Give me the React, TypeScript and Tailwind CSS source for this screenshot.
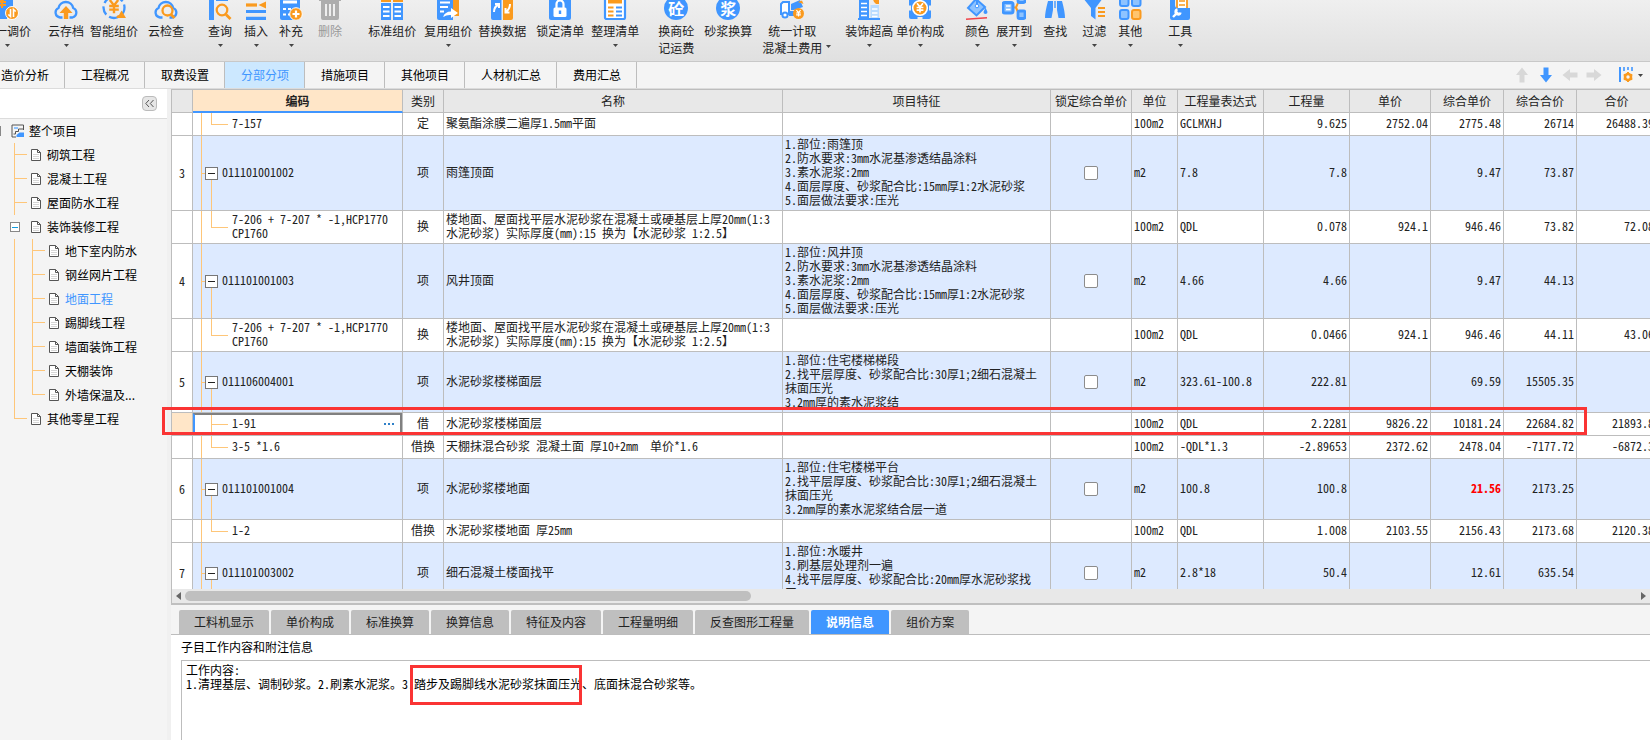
import { ReactNode } from "react";
import clsx from "clsx";

const BLUE = "#4096ff";
const ORANGE = "#fa9a1e";

const Svg = ({ children }: { children: ReactNode }) => (
  <svg className="h-6 w-6 shrink-0" viewBox="0 0 24 24" fill="none">
    {children}
  </svg>
);

const Yen = ({ x, y, s = 1, color = ORANGE }: { x: number; y: number; s?: number; color?: string }) => (
  <path
    transform={`translate(${x} ${y}) scale(${s})`}
    d="M-3.5 -5L0 -0.5L3.5 -5M0 -0.5V6M-4 0H4M-4 3H4"
    stroke={color}
    strokeWidth="2"
  />
);

const CLOUD = "M8.5 21.5H6a5 5 0 0 1-1.500-9.500A7.500 7.500 0 0 1 19.200 12A5 5 0 0 1 18.500 21.500H15.500";

const RoundGlyph = ({ char }: { char: string }) => (
  <span className="flex h-6 w-6 items-center justify-center rounded-full bg-[#4096ff] text-base leading-4 font-bold text-white">
    {char}
  </span>
);

const icons: Record<string, ReactNode> = {
  adjust: (
    <Svg>
      <path d="M5 0H18V12H12V23H5Z" fill={BLUE} />
      <Yen x={7} y={6} color={ORANGE} />
      <circle cx="17" cy="17" r="6.500" fill={ORANGE} stroke="#fff" />
      <path d="M15.500 13V20.500L13.300 18.500M18.500 21V13.500L20.700 15.500" stroke="#fff" strokeWidth="1.600" />
    </Svg>
  ),
  cloudUp: (
    <Svg>
      <path d={CLOUD} stroke={BLUE} strokeWidth="2.300" />
      <path d="M12 10L18.500 17H14.200V23H9.800V17H5.500Z" fill={ORANGE} />
    </Svg>
  ),
  smart: (
    <Svg>
      <circle cx="12" cy="11.500" r="10.500" stroke={BLUE} strokeWidth="2.300" strokeDasharray="9 3.500" />
      <Yen x={12} y={10} s={1.200} />
      <path d="M19.500 14.500L24 22H14.500Q14.500 19 17 19Z" fill={ORANGE} />
    </Svg>
  ),
  cloudCheck: (
    <Svg>
      <path d={CLOUD} stroke={BLUE} strokeWidth="2.300" />
      <circle cx="13.500" cy="14.500" r="5" fill="#eee" stroke={ORANGE} strokeWidth="2.300" />
      <path d="M17 18.500L20.500 22" stroke={ORANGE} strokeWidth="2.800" />
    </Svg>
  ),
  query: (
    <Svg>
      <path d="M1 0H6V24H1ZM8 0H20V5H8Z" fill={BLUE} />
      <circle cx="14" cy="14" r="5.300" fill="#eee" stroke={ORANGE} strokeWidth="2.200" />
      <path d="M18 18.500L22.500 23" stroke={ORANGE} strokeWidth="2.800" />
    </Svg>
  ),
  insert: (
    <Svg>
      <path d="M2 1H22M2 15.500H22M2 22.300H22" stroke={BLUE} strokeWidth="3.200" />
      <path d="M2 9H13" stroke={ORANGE} strokeWidth="3.200" />
      <path d="M14.500 9L22 5.500V12.500Z" fill={ORANGE} />
    </Svg>
  ),
  supply: (
    <Svg>
      <rect x="1" y="0" width="20" height="24" rx="2" fill={BLUE} />
      <path d="M4 6H18" stroke="#fff" strokeWidth="3" />
      <path d="M4 13H7M4 18.500H7M9 13H12M9 18.500H12" stroke="#fff" strokeWidth="2" />
      <circle cx="17" cy="18" r="6.300" fill={ORANGE} stroke="#fff" />
      <path d="M17 14.500V21.500M13.500 18H20.500" stroke="#fff" strokeWidth="2.200" />
    </Svg>
  ),
  trash: (
    <Svg>
      <path d="M1 2H23V5H1ZM3 5H21V22A2 2 0 0 1 19 24H5A2 2 0 0 1 3 22Z" fill="#adadad" />
      <path d="M8 8V20M12 8V20M16 8V20" stroke="#eee" strokeWidth="2" />
    </Svg>
  ),
  standard: (
    <Svg>
      <path d="M1 1H11V6H1ZM13 1H23V6H13Z" fill={ORANGE} />
      <path d="M1 7H11V24H1ZM13 7H23V24H13Z" fill={BLUE} />
      <path d="M3 11H9.500M3 15.500H9.500M3 20H9.500M14.500 11H21M14.500 15.500H21M14.500 20H21" stroke="#fff" strokeWidth="2" />
    </Svg>
  ),
  reuse: (
    <Svg>
      <path d="M9 1H21A2 2 0 0 1 23 3V20H9Z" fill={ORANGE} />
      <path d="M1 0H17V24H3A2 2 0 0 1 1 22Z" fill={BLUE} />
      <path d="M4 6.500H14M4 11H12M4 15.500H8" stroke="#fff" strokeWidth="2" />
      <path d="M7 21Q9 15.500 15 15.500V12L22 17L15 22V19Q11 18.500 7 21Z" fill="#fff" />
    </Svg>
  ),
  replace: (
    <Svg>
      <path d="M1 0H11.500V24H3A2 2 0 0 1 1 22Z" fill={BLUE} />
      <path d="M13 0H23V22A2 2 0 0 1 21 24H13Z" fill={ORANGE} />
      <path d="M4 16Q4 11 8 9M5 8H9V12M20 8Q20 13 16 15.500M19.500 16.500H15.500V12" stroke="#fff" strokeWidth="2" />
    </Svg>
  ),
  lock: (
    <Svg>
      <path d="M1 0H23V22A2 2 0 0 1 21 24H3A2 2 0 0 1 1 22Z" fill={BLUE} />
      <path d="M8.500 12V8A3.500 3.500 0 0 1 15.500 8V12" stroke="#fff" strokeWidth="2.200" />
      <rect x="5.500" y="11.500" width="13" height="9.500" rx="1.500" fill="#fff" />
      <path d="M12 14.500V18" stroke={BLUE} strokeWidth="2.400" />
    </Svg>
  ),
  arrange: (
    <Svg>
      <rect x="2" y="0" width="20" height="23" rx="1.500" fill="#fff" stroke={BLUE} strokeWidth="2.200" />
      <path d="M5 5.500H19" stroke={ORANGE} strokeWidth="4" />
      <path d="M5 11.500H10.500M5 15.500H10.500M5 19.500H10.500" stroke={ORANGE} strokeWidth="2" />
      <path d="M13 11.500H19M13 15.500H19M13 19.500H19" stroke={BLUE} strokeWidth="2" />
    </Svg>
  ),
  tong: <RoundGlyph char="砼" />,
  jiang: <RoundGlyph char="浆" />,
  truck: (
    <Svg>
      <path d="M1 8L3 6H9V18H1Z" stroke={BLUE} strokeWidth="2" fill="#fff" />
      <path d="M11 8L20 4L23 11L14 14H11ZM9 15H17V20H9Z" fill={BLUE} />
      <circle cx="5" cy="19" r="2.600" fill="#fff" stroke={BLUE} strokeWidth="2" />
      <path d="M18 6L22 4.500L23.500 8Z" fill={ORANGE} />
      <circle cx="18.500" cy="17.500" r="5.500" fill={ORANGE} />
      <Yen x={18.500} y={17} s={0.600} color="#fff" />
    </Svg>
  ),
  building: (
    <Svg>
      <path d="M2 0H12V22H2Z" fill={BLUE} />
      <path d="M4 7.500H10M4 11.500H10M4 15.500H10M4 19.500H10" stroke="#fff" strokeWidth="1.400" />
      <path d="M13.500 9H22V22H13.500Z" fill="#b9dcff" />
      <path d="M15 13H20.500M15 17H20.500M15 20.500H20.500" stroke="#fff" strokeWidth="1.600" />
      <path d="M16 2H22V8H19Q16 6 16 2Z" fill={ORANGE} />
      <path d="M1 23H23" stroke={BLUE} strokeWidth="2" />
    </Svg>
  ),
  chip: (
    <Svg>
      <rect x="1" y="0" width="22" height="23" rx="2" fill={BLUE} />
      <path d="M12 0V3M12 21V24M0 12H3M21 12H24" stroke="#eee" strokeWidth="5" />
      <circle cx="12" cy="12" r="7.300" fill={ORANGE} stroke="#fff" strokeWidth="1.600" />
      <Yen x={12} y={11.500} s={0.850} color="#fff" />
    </Svg>
  ),
  bucket: (
    <Svg>
      <path d="M11 3L20 11L11.500 19.500L3 12Z" fill="#8ec3ff" stroke={BLUE} strokeWidth="2" />
      <path d="M12 0V9" stroke={BLUE} strokeWidth="2" />
      <circle cx="12" cy="10" r="1.800" fill="#fff" stroke={BLUE} />
      <path d="M20.500 11.500L22.500 16A2 2 0 0 1 18.500 16Z" fill={BLUE} />
      <path d="M1 23.200L22 21.800" stroke="#f0444a" strokeWidth="1.600" />
    </Svg>
  ),
  expand: (
    <Svg>
      <path d="M11 11.500H14L17 4.500M14 11.500L17 18.500" stroke={ORANGE} strokeWidth="2" />
      <rect x="1" y="6.500" width="10" height="10.500" rx="2" fill="#8ec3ff" stroke={BLUE} strokeWidth="3" />
      <path d="M4 10H8.500M4 13.500H8.500" stroke="#fff" strokeWidth="1.400" />
      <rect x="16" y="-1" width="7" height="7.500" rx="1.500" fill="#8ec3ff" stroke={BLUE} strokeWidth="2.800" />
      <rect x="16" y="15" width="7" height="7.500" rx="1.500" fill="#8ec3ff" stroke={BLUE} strokeWidth="2.800" />
    </Svg>
  ),
  find: (
    <Svg>
      <path d="M5 5H10V14L8.500 22H2Q2 16 5 5ZM19 5H14V14L15.500 22H22Q22 16 19 5Z" fill={BLUE} />
      <path d="M12 5V12" stroke={BLUE} strokeWidth="1.400" />
      <path d="M6 0H9V4H6ZM15 0H18V4H15Z" fill={BLUE} />
    </Svg>
  ),
  filter: (
    <Svg>
      <path d="M1 2H21L13.500 12V23.500L9 20V12Z" fill={BLUE} />
      <path d="M16 12H23M16 16H23M16 20H23" stroke={ORANGE} strokeWidth="2" />
    </Svg>
  ),
  others: (
    <Svg>
      <rect x="2" y="1" width="8.500" height="9" rx="2" fill="#8ec3ff" stroke={BLUE} strokeWidth="2" />
      <rect x="14" y="1" width="8.500" height="9" rx="2" fill="#8ec3ff" stroke={BLUE} strokeWidth="2" />
      <rect x="2" y="14" width="8.500" height="9" rx="2" fill="#8ec3ff" stroke={BLUE} strokeWidth="2" />
      <rect x="14" y="14" width="8.500" height="9" rx="2" fill="#ffc56e" stroke={ORANGE} strokeWidth="2" />
    </Svg>
  ),
  tools: (
    <Svg>
      <rect x="9" y="0" width="10" height="14" fill="#fff" stroke={ORANGE} strokeWidth="1.800" />
      <path d="M11 5H17M11 9H17" stroke={ORANGE} strokeWidth="1.600" />
      <path d="M2 4H7V9Q7 12 10 12H22V22A2 2 0 0 1 20 24H4A2 2 0 0 1 2 22Z" fill={BLUE} />
      <path d="M5 21L10 16M9.500 13.500A2.500 2.500 0 1 0 12.500 16.500" stroke="#fff" strokeWidth="2.400" />
    </Svg>
  ),
};

type Tool = { icon: string; label: string; label2?: string; gap: string; menu?: boolean; disabled?: boolean };

const tools: Tool[] = [
  { icon: "adjust", label: "统一调价", gap: "-ml-[17px]", menu: true },
  { icon: "cloudUp", label: "云存档", gap: "ml-[17px]", menu: true },
  { icon: "smart", label: "智能组价", gap: "ml-1.5" },
  { icon: "cloudCheck", label: "云检查", gap: "ml-2.5" },
  { icon: "query", label: "查询", gap: "ml-6", menu: true },
  { icon: "insert", label: "插入", gap: "ml-3", menu: true },
  { icon: "supply", label: "补充", gap: "ml-[11px]", menu: true },
  { icon: "trash", label: "删除", gap: "ml-[15px]", disabled: true },
  { icon: "standard", label: "标准组价", gap: "ml-[26px]" },
  { icon: "reuse", label: "复用组价", gap: "ml-2", menu: true },
  { icon: "replace", label: "替换数据", gap: "ml-1.5" },
  { icon: "lock", label: "锁定清单", gap: "ml-2.5" },
  { icon: "arrange", label: "整理清单", gap: "ml-[7px]", menu: true },
  { icon: "tong", label: "换商砼", label2: "记运费", gap: "ml-[19px]" },
  { icon: "jiang", label: "砂浆换算", gap: "ml-2.5" },
  { icon: "truck", label: "统一计取", label2: "混凝土费用", gap: "ml-2.5", menu: true },
  { icon: "building", label: "装饰超高", gap: "ml-3.5", menu: true },
  { icon: "chip", label: "单价构成", gap: "ml-[3px]", menu: true },
  { icon: "bucket", label: "颜色", gap: "ml-[21px]", menu: true },
  { icon: "expand", label: "展开到", gap: "ml-[7px]", menu: true },
  { icon: "find", label: "查找", gap: "ml-[11px]" },
  { icon: "filter", label: "过滤", gap: "ml-[15px]", menu: true },
  { icon: "others", label: "其他", gap: "ml-3", menu: true },
  { icon: "tools", label: "工具", gap: "ml-[26px]", menu: true },
];

const Caret = ({ className }: { className?: string }) => (
  <svg className={clsx("h-[3px] w-[5px] shrink-0", className)} viewBox="0 0 5 3">
    <path d="M0 0H5L2.500 3Z" fill="#444" />
  </svg>
);

const Toolbar = () => (
  <header className="flex h-[62px] shrink-0 items-start overflow-hidden border-b border-[#c8c8c8] bg-linear-to-b from-[#efefef] to-[#e0e0e0]">
    {tools.map((tool) => (
      <button
        key={tool.label}
        type="button"
        disabled={tool.disabled}
        className={clsx(
          "-mt-1 flex shrink-0 items-end leading-[17px] whitespace-nowrap",
          tool.gap,
          tool.disabled ? "text-[#999]" : "text-[#222]"
        )}
      >
        <span className="flex flex-col items-center">
          {icons[tool.icon]}
          <span className="mt-0.5">{tool.label}</span>
          {tool.label2 && <span>{tool.label2}</span>}
          {tool.menu && !tool.label2 && <Caret className="mt-[5px]" />}
        </span>
        {tool.menu && tool.label2 && <Caret className="mb-2 ml-1" />}
      </button>
    ))}
  </header>
);

const pageTabs = ["造价分析", "工程概况", "取费设置", "分部分项", "措施项目", "其他项目", "人材机汇总", "费用汇总"];

const ARROW = "M8 0.500L14 8H10.500V15.500H5.500V8H2Z";

const ArrowButton = ({ label, rotate, active }: { label: string; rotate: number; active?: boolean }) => (
  <button type="button" aria-label={label}>
    <svg className="h-4 w-4" viewBox="0 0 16 16">
      <path d={ARROW} fill={active ? BLUE : "#d8d8d8"} transform={`rotate(${rotate} 8 8)`} />
    </svg>
  </button>
);

const PageTabs = () => (
  <nav className="flex h-[26px] shrink-0 overflow-hidden bg-[#f4f4f4]">
    {pageTabs.map((tab, i) => (
      <button
        key={tab}
        type="button"
        className={clsx(
          "shrink-0 border-r border-[#bdbdbd] pr-[15px] pl-4 whitespace-nowrap",
          i === 0 && "-ml-[15px]",
          tab === "分部分项" ? "bg-[#cce8ff] text-[#4096ff]" : "text-black"
        )}
      >
        {tab}
      </button>
    ))}
    <div className="ml-auto flex items-center gap-2 pr-[7px]">
      <ArrowButton label="上移" rotate={0} />
      <ArrowButton label="下移" rotate={180} active />
      <ArrowButton label="左移" rotate={-90} />
      <ArrowButton label="右移" rotate={90} />
      <button type="button" aria-label="列设置" className="ml-2 flex items-center gap-1">
        <svg className="h-4 w-4" viewBox="0 0 16 16" fill="none">
          <path d="M2 0V15" stroke={BLUE} strokeWidth="2" />
          <path d="M6 0V4M10 0V3M14 0V4" stroke={BLUE} strokeWidth="1.600" />
          <circle cx="10" cy="10" r="3" stroke={ORANGE} strokeWidth="2.600" />
          <path d="M10 5V7M10 13V15M5.700 7.500L7.500 8.500M12.500 11.500L14.300 12.500M5.700 12.500L7.500 11.500M12.500 8.500L14.300 7.500" stroke={ORANGE} strokeWidth="2" />
        </svg>
        <Caret />
      </button>
    </div>
  </nav>
);

type TreeNode = { label: string; level: number; open?: boolean; last?: boolean };

const tree: TreeNode[] = [
  { label: "砌筑工程", level: 1 },
  { label: "混凝土工程", level: 1 },
  { label: "屋面防水工程", level: 1 },
  { label: "装饰装修工程", level: 1, open: true },
  { label: "地下室内防水", level: 2 },
  { label: "钢丝网片工程", level: 2 },
  { label: "地面工程", level: 2 },
  { label: "踢脚线工程", level: 2 },
  { label: "墙面装饰工程", level: 2 },
  { label: "天棚装饰", level: 2 },
  { label: "外墙保温及...", level: 2, last: true },
  { label: "其他零星工程", level: 1, last: true },
];

const Guide = ({ d }: { d: string }) => (
  <svg className="h-6 w-[18px] shrink-0" viewBox="0 0 18 24" fill="none" shapeRendering="crispEdges">
    <path d={d} stroke="#fec679" />
  </svg>
);

const branchPath = (last?: boolean) => (last ? "M4.500 0V12M4 11.500H17" : "M4.500 0V24M4 11.500H17");

const Sidebar = () => (
  <aside className="flex w-[167px] shrink-0 flex-col bg-[#f4f4f4]">
    <div className="flex h-[30px] shrink-0 items-center justify-end border-b border-[#dcdcdc] bg-white pr-2.5">
      <button
        type="button"
        aria-label="收起"
        className="flex h-[15px] w-[15px] items-center justify-center rounded-sm border border-[#bbb] bg-[#e6e6e6]"
      >
        <svg className="h-[9px] w-[9px]" viewBox="0 0 9 9" fill="none">
          <path d="M4 1L0.800 4.500L4 8M8.500 1L5.300 4.500L8.500 8" stroke="#555" />
        </svg>
      </button>
    </div>
    <ul className="text-black">
      <li className="flex h-6 items-center">
        <span className="h-2.5 w-px bg-[#888]" />
        <svg className="mr-1 ml-2.5 h-3.5 w-3.5" viewBox="0 0 14 14" fill="none">
          <path d="M12.500 6V1H1V13H5" stroke="#555" />
          <path d="M3 4H7" stroke="#8ec3ff" strokeWidth="2" />
          <path d="M2.500 10H4.500V7.500H7.500V5H12.500" stroke="#555" />
          <path d="M5.500 13V11L8.500 8.500H13V13Z" fill={BLUE} />
        </svg>
        整个项目
      </li>
      {tree.map((node) => (
        <li key={node.label} className="flex h-6 items-center pl-2.5">
          {node.level === 2 && <Guide d="M4.500 0V24" />}
          {node.open ? (
            <button type="button" aria-label="折叠" className="mr-2 flex h-[10px] w-[10px] items-center justify-center border border-[#888] bg-white">
              <span className="h-px w-1.5 bg-[#0f9be0]" />
            </button>
          ) : (
            <Guide d={branchPath(node.last)} />
          )}
          <svg className="mr-1.5 ml-[3px] h-3 w-2.5 shrink-0" viewBox="0 0 10 12" fill="none">
            <path d="M0.500 0.500H6.500L9.500 3.500V11.500H0.500Z" fill="#fff" stroke="#555" />
            <path d="M6.500 0.500V3.500H9.500" stroke="#555" />
            <path d="M2 5.500H8M2 7.500H8M2 9.500H8" stroke="#ccc" strokeWidth="0.800" />
          </svg>
          <a href="#" className={clsx("whitespace-nowrap", node.label === "地面工程" && "text-[#4096ff]")}>
            {node.label}
          </a>
        </li>
      ))}
    </ul>
  </aside>
);

type Row = {
  no?: string;
  code: string;
  kind: string;
  name: string;
  feature?: string;
  unit: string;
  expr: string;
  nums: string[];
  height: string;
  more?: boolean;
  selected?: boolean;
  warn?: boolean;
};

const subCode = "7-206 + 7-207 * -1,HCP1770\nCP1760";
const subName = "楼地面、屋面找平层水泥砂浆在混凝土或硬基层上厚20mm(1:3\n水泥砂浆) 实际厚度(mm):15 换为【水泥砂浆 1:2.5】";

const rows: Row[] = [
  { code: "7-157", kind: "定", name: "聚氨酯涂膜二遍厚1.5mm平面", unit: "100m2", expr: "GCLMXHJ", nums: ["9.625", "2752.04", "2775.48", "26714", "26488.39"], height: "h-[22px]" },
  { no: "3", code: "011101001002", kind: "项", name: "雨篷顶面", feature: "1.部位:雨篷顶\n2.防水要求:3mm水泥基渗透结晶涂料\n3.素水泥浆:2mm\n4.面层厚度、砂浆配合比:15mm厚1:2水泥砂浆\n5.面层做法要求:压光", unit: "m2", expr: "7.8", nums: ["7.8", "", "9.47", "73.87", ""], height: "h-[74px]" },
  { code: subCode, kind: "换", name: subName, unit: "100m2", expr: "QDL", nums: ["0.078", "924.1", "946.46", "73.82", "72.08"], height: "h-8" },
  { no: "4", code: "011101001003", kind: "项", name: "风井顶面", feature: "1.部位:风井顶\n2.防水要求:3mm水泥基渗透结晶涂料\n3.素水泥浆:2mm\n4.面层厚度、砂浆配合比:15mm厚1:2水泥砂浆\n5.面层做法要求:压光", unit: "m2", expr: "4.66", nums: ["4.66", "", "9.47", "44.13", ""], height: "h-[74px]" },
  { code: subCode, kind: "换", name: subName, unit: "100m2", expr: "QDL", nums: ["0.0466", "924.1", "946.46", "44.11", "43.06"], height: "h-8" },
  { no: "5", code: "011106004001", kind: "项", name: "水泥砂浆楼梯面层", feature: "1.部位:住宅楼梯梯段\n2.找平层厚度、砂浆配合比:30厚1;2细石混凝土\n抹面压光\n3.2mm厚的素水泥浆结", unit: "m2", expr: "323.61-100.8", nums: ["222.81", "", "69.59", "15505.35", ""], height: "h-[60px]" },
  { code: "1-91", kind: "借", name: "水泥砂浆楼梯面层", unit: "100m2", expr: "QDL", nums: ["2.2281", "9826.22", "10181.24", "22684.82", "21893.8"], height: "h-[22px]", more: true, selected: true },
  { code: "3-5 *1.6", kind: "借换", name: "天棚抹混合砂浆 混凝土面 厚10+2mm  单价*1.6", unit: "100m2", expr: "-QDL*1.3", nums: ["-2.89653", "2372.62", "2478.04", "-7177.72", "-6872.3"], height: "h-[22px]" },
  { no: "6", code: "011101001004", kind: "项", name: "水泥砂浆楼地面", feature: "1.部位:住宅楼梯平台\n2.找平层厚度、砂浆配合比:30厚1;2细石混凝土\n抹面压光\n3.2mm厚的素水泥浆结合层一道", unit: "m2", expr: "100.8", nums: ["100.8", "", "21.56", "2173.25", ""], height: "h-[60px]", warn: true },
  { code: "1-2", kind: "借换", name: "水泥砂浆楼地面 厚25mm", unit: "100m2", expr: "QDL", nums: ["1.008", "2103.55", "2156.43", "2173.68", "2120.38"], height: "h-[22px]" },
  { no: "7", code: "011101003002", kind: "项", name: "细石混凝土楼面找平", feature: "1.部位:水暖井\n3.刷基层处理剂一遍\n4.找平层厚度、砂浆配合比:20mm厚水泥砂浆找\n平", unit: "m2", expr: "2.8*18", nums: ["50.4", "", "12.61", "635.54", ""], height: "h-[60px]" },
];

const columns = [
  { label: "", width: "w-[21px]" },
  { label: "编码", width: "w-[210px]" },
  { label: "类别", width: "w-[41px]" },
  { label: "名称", width: "w-[339px]" },
  { label: "项目特征", width: "w-[268px]" },
  { label: "锁定综合单价", width: "w-[81px]" },
  { label: "单位", width: "w-[46px]" },
  { label: "工程量表达式", width: "w-[86px]" },
  { label: "工程量", width: "w-[86px]" },
  { label: "单价", width: "w-[81px]" },
  { label: "综合单价", width: "w-[73px]" },
  { label: "综合合价", width: "w-[73px]" },
  { label: "合价", width: "w-20" },
];

const CodeCell = ({ row }: { row: Row }) => (
  <div
    className={clsx(
      "flex items-center",
      row.height,
      row.selected && "border-2 border-[#808080] border-l-[#4096ff]"
    )}
  >
    <span className={clsx("h-full shrink-0", row.selected ? "w-1.5" : "w-2")} />
    <span className={clsx("flex w-1 shrink-0 items-center self-stretch border-l", row.selected ? "border-transparent" : "border-[#fec679]")}>
      {row.no && <span className="h-px w-full bg-[#fec679]" />}
    </span>
    {row.no ? (
      <span className="mr-1 flex w-[13px] shrink-0 flex-col items-center self-stretch">
        <span className="flex-1" />
        <button type="button" aria-label="折叠" className="flex h-[13px] w-[13px] items-center justify-center border border-[#777] bg-white">
          <span className="h-px w-[7px] bg-[#222]" />
        </button>
        <span className="w-px flex-1 bg-[#fec679]" />
      </span>
    ) : (
      <span className="mr-1 ml-1.5 flex w-[17px] shrink-0 flex-col self-stretch">
        <span className="flex-1 border-b border-l border-[#fec679]" />
        <span className={clsx("flex-1", row.more && "border-l border-[#fec679]")} />
      </span>
    )}
    <span className="pb-0.5 whitespace-pre">{row.code}</span>
    {row.selected && (
      <button type="button" aria-label="更多" className="mr-1.5 ml-auto flex gap-0.5">
        <span className="h-0.5 w-0.5 bg-[#2f80c8]" />
        <span className="h-0.5 w-0.5 bg-[#2f80c8]" />
        <span className="h-0.5 w-0.5 bg-[#2f80c8]" />
      </button>
    )}
  </div>
);

const line = "border-r border-b border-[#bdbdbd]";
const cell = "border-r border-b border-[#bdbdbd] p-0 pb-0.5";

const Grid = () => (
  <div className="min-h-0 flex-1 overflow-hidden border-t border-l border-[#bdbdbd]">
    <table className="w-[1485px] table-fixed border-separate border-spacing-0 font-['Noto_Sans_Mono_CJK_SC','Noto_Sans_CJK_SC',monospace] leading-[14px] text-[#222]">
      <thead>
        <tr className="h-[23px]">
          {columns.map((col) => (
            <th
              key={col.label}
              className={clsx(
                line,
                col.width,
                "p-0 whitespace-nowrap",
                col.label === "编码" ? "border-b-2 border-b-[#4096ff] bg-[#ffe6c8] font-bold" : "bg-[#e8e8e8] font-normal"
              )}
            >
              {col.label}
            </th>
          ))}
        </tr>
      </thead>
      <tbody>
        {rows.map((row, i) => (
          <tr key={i} className={row.no ? "bg-[#ddeaff]" : "bg-white"}>
            <td className={clsx(line, "p-0 text-center", row.selected ? "bg-[#ffe6c8]" : "bg-white")}>{row.no}</td>
            <td className={clsx(line, "p-0")}>
              <CodeCell row={row} />
            </td>
            <td className={clsx(cell, "text-center")}>{row.kind}</td>
            <td className={clsx(cell, "pl-0.5 whitespace-pre")}>{row.name}</td>
            <td className={clsx(cell, "pl-0.5 whitespace-pre")}>{row.feature}</td>
            <td className={clsx(line, "p-0 text-center")}>
              {row.no && (
                <input
                  type="checkbox"
                  aria-label={`锁定综合单价 ${row.code}`}
                  className="mx-auto block h-3.5 w-3.5 appearance-none rounded-xs border border-[#8c8c8c] bg-white"
                />
              )}
            </td>
            <td className={clsx(cell, "pl-0.5")}>{row.unit}</td>
            <td className={clsx(cell, "pl-0.5")}>{row.expr}</td>
            {row.nums.map((num, n) => (
              <td key={n} className={clsx(cell, "pr-0.5 text-right", row.warn && n === 2 && "font-bold text-[#f00]")}>
                {num}
              </td>
            ))}
          </tr>
        ))}
      </tbody>
    </table>
  </div>
);

const ScrollBar = () => (
  <div className="flex h-3.5 shrink-0 items-center border-l border-[#bdbdbd] bg-[#e8e8e8] px-1">
    <svg className="h-2 w-[5px] shrink-0" viewBox="0 0 5 8">
      <path d="M5 0V8L0 4Z" fill="#666" />
    </svg>
    <div className="mx-1 flex-1">
      <div className="h-2.5 w-[39%] rounded-full bg-[#bfbfbf]" />
    </div>
    <svg className="h-2 w-[5px] shrink-0" viewBox="0 0 5 8">
      <path d="M0 0V8L5 4Z" fill="#666" />
    </svg>
  </div>
);

const detailTabs = ["工料机显示", "单价构成", "标准换算", "换算信息", "特征及内容", "工程量明细", "反查图形工程量", "说明信息", "组价方案"];

const note = "工作内容:\n1.清理基层、调制砂浆。2.刷素水泥浆。3.踏步及踢脚线水泥砂浆抹面压光、底面抹混合砂浆等。";

const DetailPanel = () => (
  <section className="flex h-[137px] shrink-0 flex-col border-t-2 border-[#bfbfbf] bg-white">
    <div className="flex h-[30px] shrink-0 items-end gap-0.5 border-b border-[#bdbdbd] bg-[#f4f4f4] pl-2">
      {detailTabs.map((tab) => (
        <button
          key={tab}
          type="button"
          className={clsx(
            "h-6 shrink-0 rounded-t-xs px-[15px] whitespace-nowrap",
            tab === "说明信息" ? "bg-[#4096ff] font-bold text-white" : "bg-[#bfbfbf] text-[#222]"
          )}
        >
          {tab}
        </button>
      ))}
    </div>
    <label htmlFor="note" className="flex h-[25px] shrink-0 items-center pb-0.5 pl-2.5 text-black">
      子目工作内容和附注信息
    </label>
    <div className="relative ml-2.5 flex-1">
      <textarea
        id="note"
        readOnly
        value={note}
        className="block h-full w-full resize-none overflow-hidden border-t border-l border-[#bdbdbd] pt-0.5 pl-1 font-['Noto_Sans_Mono_CJK_SC','Noto_Sans_CJK_SC',monospace] leading-[14px] text-black outline-none"
      />
      <div className="pointer-events-none absolute top-[5px] left-[229px] h-10 w-[172px] border-3 border-[#fa3434]" />
    </div>
  </section>
);

const App = () => {
  return (
    <div className="relative flex h-screen flex-col overflow-hidden bg-[#f4f4f4] font-['Noto_Sans_CJK_SC',sans-serif] text-xs">
      <Toolbar />
      <PageTabs />
      <div className="flex min-h-0 flex-1 border-t border-[#dcdcdc]">
        <Sidebar />
        <div className="w-1 shrink-0 bg-[#f0f0f0]" />
        <main className="flex min-w-0 flex-1 flex-col">
          <Grid />
          <ScrollBar />
          <DetailPanel />
        </main>
      </div>
      <div className="pointer-events-none absolute top-[407px] left-[162px] h-7 w-[1425px] border-3 border-[#fa3434]" />
    </div>
  );
};

export default App;
